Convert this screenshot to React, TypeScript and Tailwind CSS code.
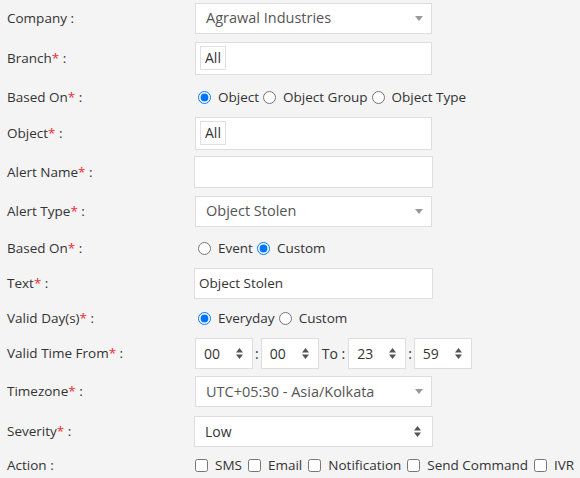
import React from 'react';

const Req = () => <span className="text-[#ef2b2b]">*</span>;

const Label: React.FC<{ text: string; req?: boolean }> = ({ text, req }) => (
  <div className="w-[194px] shrink-0 pl-[7px] text-[13.5px] text-[#333]">
    {text}
    {req && <Req />} :
  </div>
);

const Caret = () => (
  <svg width="8" height="5" viewBox="0 0 8 5" className="text-[#999]">
    <path d="M0 0h8L4 5z" fill="currentColor" />
  </svg>
);

const UpDown = () => (
  <svg width="7" height="11" viewBox="0 0 7 11" className="text-[#555]">
    <path d="M3.5 0l3.5 4.5H0z M3.5 11l3.5-4.5H0z" fill="currentColor" />
  </svg>
);

const Select2: React.FC<{ value: string }> = ({ value }) => (
  <div className="flex h-[31px] w-[237px] items-center justify-between border border-[#ddd] bg-white pl-[10px] pr-[8px] text-[14.5px] text-[#555]">
    <span>{value}</span>
    <Caret />
  </div>
);

const Tags = () => (
  <div className="flex h-[33px] w-[237px] items-center border border-[#ddd] bg-white px-[4px]">
    <span className="border border-[#e0e0e0] px-[4px] py-[1px] text-[14px] leading-[20px] text-[#333]">All</span>
  </div>
);

const Radio: React.FC<{ label: string; checked?: boolean; name: string }> = ({ label, checked, name }) => (
  <label className="flex items-center whitespace-nowrap">
    <input type="radio" name={name} defaultChecked={checked} className="m-0 ml-[4px] mr-[7px] h-[13px] w-[13px] accent-[#0075ff]" />
    <span>{label}</span>
  </label>
);

const Spin: React.FC<{ value: string }> = ({ value }) => (
  <div className="flex h-[31px] w-[58px] items-center justify-between border border-[#ddd] bg-white pl-[8px] pr-[9px] text-[14px] text-[#333]">
    <span>{value}</span>
    <UpDown />
  </div>
);

const Check: React.FC<{ label: string }> = ({ label }) => (
  <label className="flex items-center whitespace-nowrap">
    <input type="checkbox" className="m-0 ml-[1px] mr-[7px] h-[13px] w-[13px]" />
    <span>{label}</span>
  </label>
);

export default function App() {
  return (
    <div className="h-[478px] w-[580px] overflow-hidden bg-[#f4f4f4] font-['Open_Sans',sans-serif] text-[13.5px] text-[#333]">
      <div className="flex h-[36px] items-center">
        <Label text="Company" />
        <div className="pl-[1px]"><Select2 value="Agrawal Industries" /></div>
      </div>
      <div className="flex h-[44px] items-center">
        <Label text="Branch" req />
        <div className="pl-[1px]"><Tags /></div>
      </div>
      <div className="flex h-[34px] items-center text-[13.5px]">
        <Label text="Based On" req />
        <Radio name="b1" label="Object" checked />
        <Radio name="b1" label="Object Group" />
        <Radio name="b1" label="Object Type" />
      </div>
      <div className="flex h-[38px] items-center">
        <Label text="Object" req />
        <div className="pl-[1px]"><Tags /></div>
      </div>
      <div className="flex h-[40px] items-center">
        <Label text="Alert Name" req />
        <div className="h-[32px] w-[239px] border border-[#ddd] bg-white" />
      </div>
      <div className="flex h-[38px] items-center">
        <Label text="Alert Type" req />
        <div className="pl-[1px]"><Select2 value="Object Stolen" /></div>
      </div>
      <div className="flex h-[36px] items-center text-[13.5px]">
        <Label text="Based On" req />
        <Radio name="b2" label="Event" />
        <Radio name="b2" label="Custom" checked />
      </div>
      <div className="flex h-[34px] items-center">
        <Label text="Text" req />
        <div className="flex h-[31px] w-[239px] items-center border border-[#ddd] bg-white pl-[4px] text-[13.5px] text-[#333]">Object Stolen</div>
      </div>
      <div className="flex h-[36px] items-center text-[13.5px]">
        <Label text="Valid Day(s)" req />
        <Radio name="b3" label="Everyday" checked />
        <Radio name="b3" label="Custom" />
      </div>
      <div className="flex h-[34px] items-center">
        <Label text="Valid Time From" req />
        <div className="flex items-center pl-[1px] text-[14px]">
          <Spin value="00" />
          <span className="px-[2px]">:</span>
          <Spin value="00" />
          <span className="px-[3px]">To :</span>
          <Spin value="23" />
          <span className="px-[2px]">:</span>
          <Spin value="59" />
        </div>
      </div>
      <div className="flex h-[43px] items-center">
        <Label text="Timezone" req />
        <div className="pl-[1px]"><Select2 value="UTC+05:30 - Asia/Kolkata" /></div>
      </div>
      <div className="flex h-[36px] items-center">
        <Label text="Severity" req />
        <div className="flex h-[31px] w-[239px] items-center justify-between border border-[#ddd] bg-white pl-[10px] pr-[11px] text-[14px] text-[#333]">
          <span>Low</span>
          <UpDown />
        </div>
      </div>
      <div className="flex h-[32px] items-center">
        <Label text="Action" />
        <div className="flex items-center gap-[5px] text-[13.5px]">
          <Check label="SMS" />
          <Check label="Email" />
          <Check label="Notification" />
          <Check label="Send Command" />
          <Check label="IVR" />
        </div>
      </div>
    </div>
  );
}
